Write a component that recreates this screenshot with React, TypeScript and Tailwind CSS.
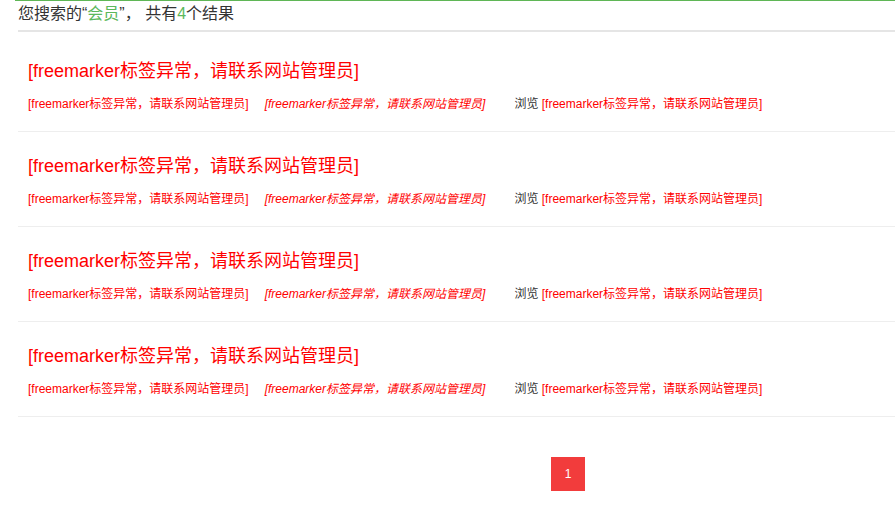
const msg = "[freemarker标签异常，请联系网站管理员]";

const items = [1, 2, 3, 4];

function ResultItem() {
  return (
    <li className="border-b border-[#eeeeee] pt-[22px] pb-[17px] pl-[10px]">
      <h3 className="text-[18px] leading-[24px] text-[#ff0000] whitespace-nowrap">{msg}</h3>
      <p className="mt-[11px] flex text-[12px] leading-[20px] whitespace-nowrap">
        <span className="text-[#ff0000]">{msg}</span>
        <span className="ml-[16px] italic text-[#ff0000]">{msg}</span>
        <span className="ml-[29px] text-[#333333]">
          浏览 <span className="text-[#ff0000]">{msg}</span>
        </span>
      </p>
    </li>
  );
}

export default function App() {
  return (
    <div
      className="min-h-[511px] bg-white"
      style={{ fontFamily: '"Liberation Sans", "Noto Sans CJK SC", sans-serif' }}
    >
      <div className="ml-[15px] h-px bg-[#5fb656]" />
      <div className="ml-[18px]">
        <div className="h-[31px] border-b-2 border-[#e5e5e5] text-[16px] leading-[26px] text-[#333333] whitespace-nowrap">
          您搜索的“<span className="text-[#5cb85c]">会员</span>”， 共有
          <span className="text-[#5cb85c]">4</span>个结果
        </div>
        <ul className="mt-[5px]">
          {items.map((i) => (
            <ResultItem key={i} />
          ))}
        </ul>
        <div className="mt-[40px] pl-[533px]">
          <a className="flex h-[34px] w-[34px] items-center justify-center bg-[#f23c3c] text-[12px] text-white">
            1
          </a>
        </div>
      </div>
    </div>
  );
}
